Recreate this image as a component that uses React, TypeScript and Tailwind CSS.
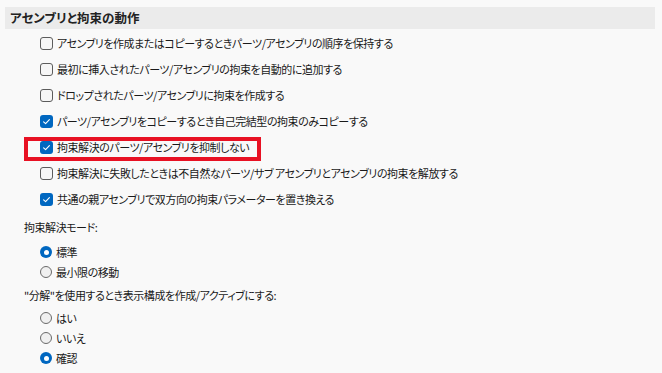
import React from "react";

const CHECKS: { label: string; checked: boolean; highlight?: boolean }[] = [
  { label: "アセンブリを作成またはコピーするときパーツ/アセンブリの順序を保持する", checked: false },
  { label: "最初に挿入されたパーツ/アセンブリの拘束を自動的に追加する", checked: false },
  { label: "ドロップされたパーツ/アセンブリに拘束を作成する", checked: false },
  { label: "パーツ/アセンブリをコピーするとき自己完結型の拘束のみコピーする", checked: true },
  { label: "拘束解決のパーツ/アセンブリを抑制しない", checked: true, highlight: true },
  { label: "拘束解決に失敗したときは不自然なパーツ/サブ アセンブリとアセンブリの拘束を解放する", checked: false },
  { label: "共通の親アセンブリで双方向の拘束パラメーターを置き換える", checked: true },
];

function Check({ checked }: { checked: boolean }) {
  if (checked) {
    return (
      <span className="flex h-[13px] w-[13px] shrink-0 items-center justify-center rounded-[3px] bg-[#0067c0]">
        <svg width="9" height="9" viewBox="0 0 9 9" fill="none">
          <path d="M1.6 4.8 L3.6 6.6 L7.4 2.6" stroke="white" strokeWidth="1.1" strokeLinecap="round" strokeLinejoin="round" />
        </svg>
      </span>
    );
  }
  return <span className="h-[13px] w-[13px] shrink-0 rounded-[3px] border border-[#5c5c5c] bg-[#f6f6f6]" />;
}

function Radio({ checked }: { checked: boolean }) {
  if (checked) {
    return (
      <span className="flex h-[12px] w-[12px] shrink-0 items-center justify-center rounded-full bg-[#0067c0]">
        <span className="h-[5px] w-[5px] rounded-full bg-white" />
      </span>
    );
  }
  return <span className="h-[12px] w-[12px] shrink-0 rounded-full border border-[#6a6a6a] bg-[#f0f0f0]" />;
}

const font = "font-['Noto_Sans_CJK_JP',sans-serif] [font-feature-settings:'palt']";

export default function App() {
  return (
    <div className={`h-[373px] w-[662px] overflow-hidden bg-[#f9f9f9] pt-[7px] text-[11px] tracking-[-0.45px] text-[#1a1a1a] ${font}`}>
      {/* Section header */}
      <div className="ml-[5px] mr-[7px] flex h-[22px] items-center bg-[#ebebeb] pl-[5px]">
        <span className="text-[12.5px] font-bold tracking-normal text-[#222]">アセンブリと拘束の動作</span>
      </div>

      {/* Checkboxes */}
      <div className="mt-[1px] flex flex-col">
        {CHECKS.map((c) => (
          <div key={c.label} className="relative flex h-[26px] items-center gap-[4px] pl-[40px]">
            <Check checked={c.checked} />
            <span className="leading-none">{c.label}</span>
            {c.highlight && (
              <span className="pointer-events-none absolute bottom-[-1px] left-[24px] top-[3px] w-[237px] border-[4px] border-[#e81123]" />
            )}
          </div>
        ))}
      </div>

      {/* Constraint solve mode */}
      <div className="flex h-[30px] items-center pl-[24px]">拘束解決モード:</div>
      <div className="flex flex-col">
        <div className="flex h-[20px] items-center gap-[4px] pl-[40px]">
          <Radio checked />
          <span>標準</span>
        </div>
        <div className="flex h-[20px] items-center gap-[4px] pl-[40px]">
          <Radio checked={false} />
          <span>最小限の移動</span>
        </div>
      </div>

      {/* Explode */}
      <div className="flex h-[26px] items-center pl-[24px]">"分解"を使用するとき表示構成を作成/アクティブにする:</div>
      <div className="flex flex-col">
        {[
          { label: "はい", checked: false },
          { label: "いいえ", checked: false },
          { label: "確認", checked: true },
        ].map((r) => (
          <div key={r.label} className="flex h-[20px] items-center gap-[4px] pl-[40px]">
            <Radio checked={r.checked} />
            <span>{r.label}</span>
          </div>
        ))}
      </div>
    </div>
  );
}
